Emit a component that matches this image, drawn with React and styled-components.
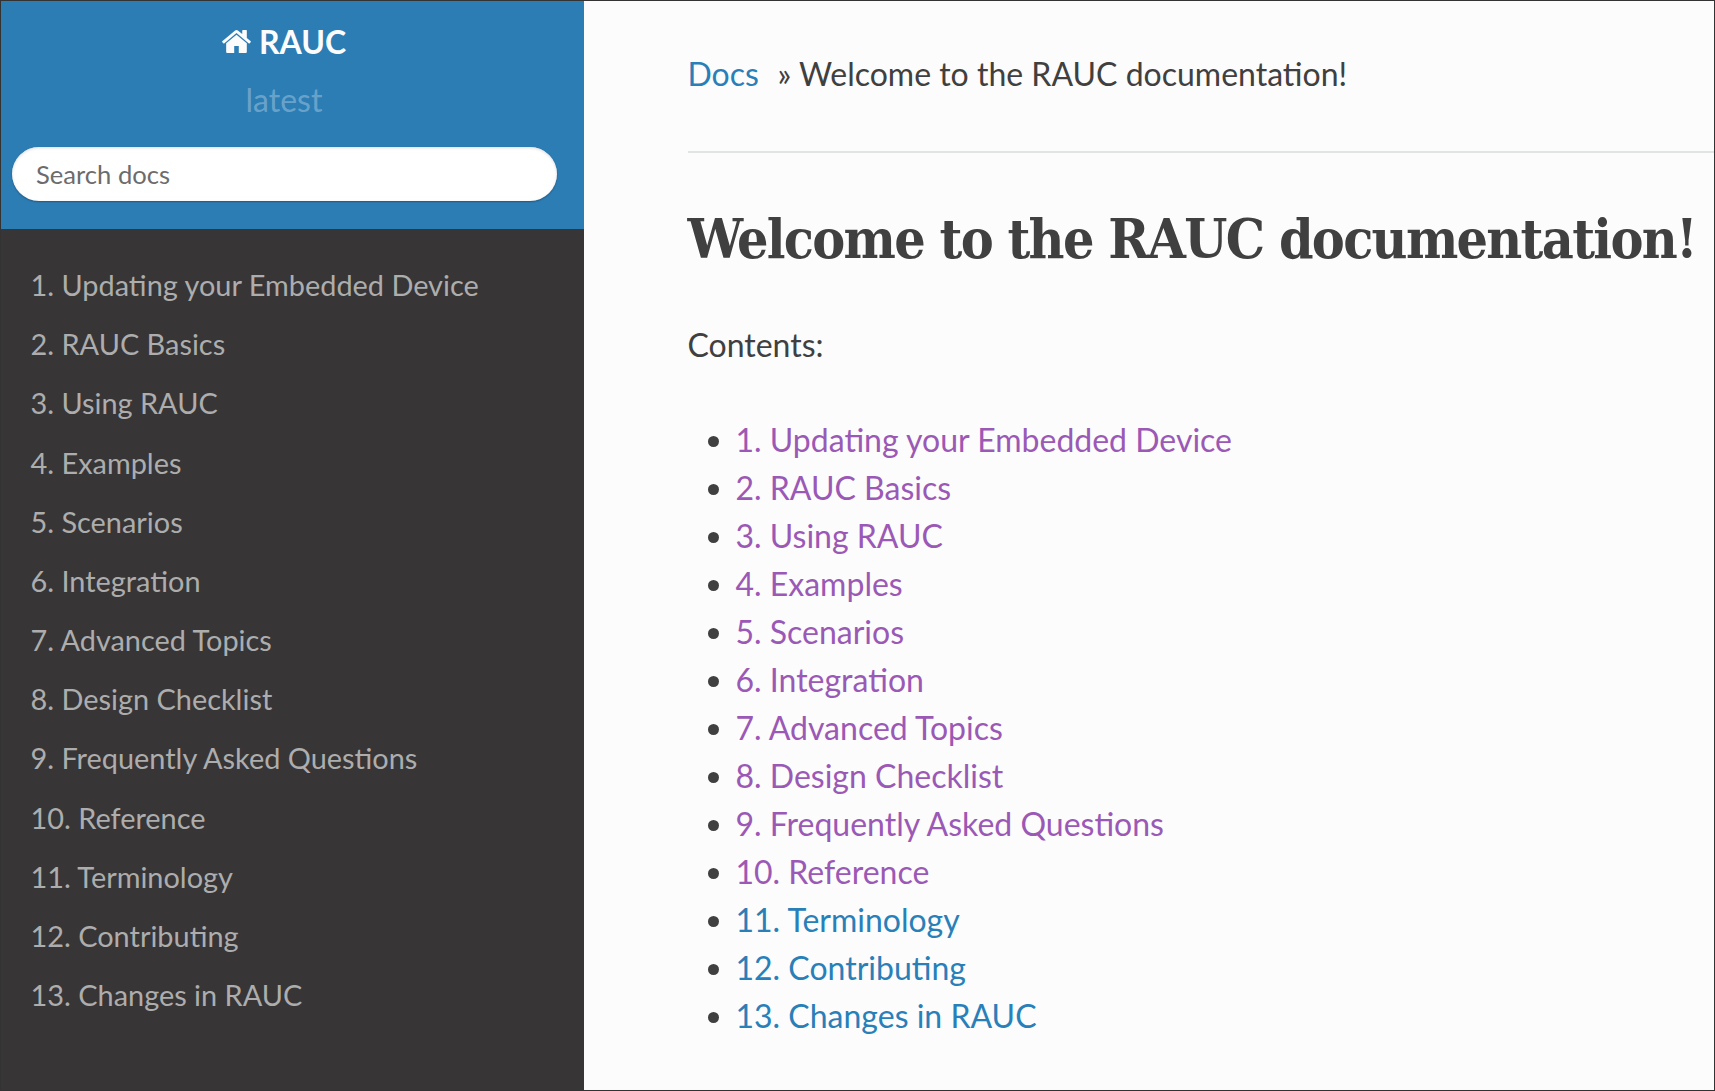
import React from "react";
import styled, { createGlobalStyle } from "styled-components";

const Global = createGlobalStyle`
  html, body { margin: 0; padding: 0; height: 100%; overflow: hidden; }
  * { box-sizing: border-box; }
  body { font-family: Lato, "Open Sans", sans-serif; }
`;

const Frame = styled.div`
  display: flex;
  width: 1715px;
  height: 1091px;
  border: 1px solid #333;
  background: #fcfcfc;
  overflow: hidden;
`;

const Sidebar = styled.nav`
  flex: 0 0 583px;
  display: flex;
  flex-direction: column;
  background: #373536;
`;

const SearchArea = styled.div`
  height: 228px;
  background: #2d7db5;
  padding: 16px 17px 0 0;
  display: flex;
  flex-direction: column;
  align-items: center;
`;

const Brand = styled.a`
  display: flex;
  align-items: center;
  gap: 8px;
  height: 48px;
  color: #fcfcfc;
  font-size: 32px;
  font-weight: 700;
`;

const HomeIcon = styled.svg`
  width: 29px;
  height: 23px;
  fill: #fcfcfc;
`;

const Version = styled.div`
  margin-top: 11px;
  height: 48px;
  line-height: 48px;
  font-size: 32px;
  color: rgba(255, 255, 255, 0.3);
`;

const SearchBox = styled.div`
  width: 545px;
  height: 54px;
  margin-top: 23px;
  padding-left: 24.5px;
  border-radius: 27px;
  background: #fff;
  box-shadow: inset 0 1px 3px #ddd, 0 1px 2px rgba(0, 0, 0, 0.3);
  color: #6c6c6c;
  font-size: 25.6px;
  line-height: 54px;
`;

const Menu = styled.ul`
  list-style: none;
  margin: 0;
  padding: 26px 0 0 29.5px;
`;

const MenuItem = styled.li`
  height: 59.18px;
  line-height: 59.18px;
  font-size: 28.9px;
  color: #adadad;
  white-space: nowrap;
`;

const Main = styled.main`
  flex: 1;
  min-width: 0;
  padding: 0 0 0 103.5px;
  background: #fcfcfc;
`;

const Crumbs = styled.div`
  height: 152px;
  padding-top: 49px;
  border-bottom: 2px solid #e1e4e5;
  font-size: 32px;
  line-height: 48px;
  color: #404040;
  white-space: nowrap;
`;

const CrumbLink = styled.a`
  color: #2980b9;
  margin-right: 18.5px;
`;

const Title = styled.h1`
  margin: 50px 0 0;
  font-family: "DejaVu Serif Condensed", "DejaVu Serif", serif;
  font-size: 55px;
  letter-spacing: -1.7px;
  line-height: 72px;
  font-weight: 700;
  color: #404040;
  white-space: nowrap;
`;

const Caption = styled.p`
  margin: 46px 0 0;
  font-size: 32px;
  line-height: 48px;
  color: #404040;
`;

const Toc = styled.ul`
  margin: 47px 0 0;
  padding: 0 0 0 48px;
  list-style: disc;
  color: #404040;
`;

const TocItem = styled.li`
  font-size: 32px;
  line-height: 48px;
  color: #404040;
`;

const TocLink = styled.a`
  color: ${(p) => (p.$visited ? "#9b59b6" : "#2980b9")};
`;

const items = [
  "1. Updating your Embedded Device",
  "2. RAUC Basics",
  "3. Using RAUC",
  "4. Examples",
  "5. Scenarios",
  "6. Integration",
  "7. Advanced Topics",
  "8. Design Checklist",
  "9. Frequently Asked Questions",
  "10. Reference",
  "11. Terminology",
  "12. Contributing",
  "13. Changes in RAUC",
];

export default function App() {
  return (
    <Frame>
      <Global />
      <Sidebar>
        <SearchArea>
          <Brand>
            <HomeIcon viewBox="26 253 1612 1283">
              <path d="M1408 992v480q0 26-19 45t-45 19h-384v-384h-256v384h-384q-26 0-45-19t-19-45v-480q0-1 .5-3t.5-3l575-474 575 474q1 2 1 6zm223-69l-62 74q-8 9-21 11h-3q-13 0-21-7l-692-577-692 577q-12 8-24 7-13-2-21-11l-62-74q-8-10-7-23.500t11-21.500l719-599q32-26 76-26t76 26l244 204v-195q0-14 9-23t23-9h192q14 0 23 9t9 23v408l219 182q10 8 11 21.500t-7 23.500z" />
            </HomeIcon>
            RAUC
          </Brand>
          <Version>latest</Version>
          <SearchBox>Search docs</SearchBox>
        </SearchArea>
        <Menu>
          {items.map((t) => (
            <MenuItem key={t}>{t}</MenuItem>
          ))}
        </Menu>
      </Sidebar>
      <Main>
        <Crumbs>
          <CrumbLink>Docs</CrumbLink>» Welcome to the RAUC documentation!
        </Crumbs>
        <Title>Welcome to the RAUC documentation!</Title>
        <Caption>Contents:</Caption>
        <Toc>
          {items.map((t, i) => (
            <TocItem key={t}>
              <TocLink $visited={i < 10}>{t}</TocLink>
            </TocItem>
          ))}
        </Toc>
      </Main>
    </Frame>
  );
}
